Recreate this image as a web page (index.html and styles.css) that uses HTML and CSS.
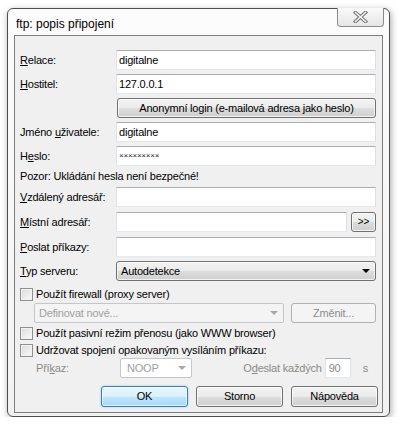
FILE: index.html
```html
<!DOCTYPE html>
<html lang="cs">
<head>
<meta charset="utf-8">
<title>ftp: popis připojení</title>
<link rel="stylesheet" href="styles.css">
</head>
<body>
<div class="window">
  <div class="titlebar">
    <span class="title">ftp: popis připojení</span>
    <div class="close">
      <svg width="15" height="12" viewBox="0 0 15 12"><path d="M2.5 1.5 L12.5 10.5 M12.5 1.5 L2.5 10.5" stroke="#7a7a7a" stroke-width="3.6" stroke-linecap="square" fill="none"/><path d="M2.5 1.5 L12.5 10.5 M12.5 1.5 L2.5 10.5" stroke="#f4f4f4" stroke-width="1.5" stroke-linecap="square" fill="none"/></svg>
    </div>
  </div>
  <div class="client">
    <div class="row first"><span class="lbl"><u>R</u>elace:</span><div class="field">digitalne</div></div>
    <div class="row"><span class="lbl"><u>H</u>ostitel:</span><div class="field">127.0.0.1</div></div>
    <div class="row"><div class="btn anon">Anonymní login (e-mailová adresa jako heslo)</div></div>
    <div class="row"><span class="lbl">Jméno <u>u</u>živatele:</span><div class="field">digitalne</div></div>
    <div class="row"><span class="lbl">H<u>e</u>slo:</span><div class="field pwd">×××××××××</div></div>
    <div class="note">Pozor: Ukládání hesla není bezpečné!</div>
    <div class="row m3"><span class="lbl"><u>V</u>zdálený adresář:</span><div class="field"></div></div>
    <div class="row m5"><span class="lbl"><u>M</u>ístní adresář:</span><div class="field"></div><div class="btn small">&gt;&gt;</div></div>
    <div class="row m5"><span class="lbl"><u>P</u>oslat příkazy:</span><div class="field"></div></div>
    <div class="row"><span class="lbl"><u>T</u>yp serveru:</span><div class="combo"><span>Autodetekce</span><span class="arrow"></span></div></div>
    <div class="check m6"><span class="box"></span><span>Použít firewall (proxy server)</span></div>
    <div class="row m2 indent">
      <div class="dcombo wide"><span>Definovat nové...</span><span class="arrow grey"></span></div>
      <div class="btn disabled change">Změnit...</div>
    </div>
    <div class="check m3"><span class="box"></span><span>Použít pasivní režim přenosu (jako WWW browser)</span></div>
    <div class="check m3"><span class="box"></span><span>Udržovat spojení opakovaným vysíláním příkazu:</span></div>
    <div class="row m1 cmdrow">
      <span class="lbl dim short">Pří<u>k</u>az:</span>
      <div class="dcombo noop"><span>NOOP</span><span class="arrow grey"></span></div>
      <span class="dim every">O<u>d</u>eslat každých</span>
      <div class="field num">90</div>
      <span class="dim unit">s</span>
    </div>
    <div class="buttons">
      <div class="btn default">OK</div>
      <div class="btn">Storno</div>
      <div class="btn">Nápověda</div>
    </div>
  </div>
</div>
</body>
</html>
```
FILE: styles.css
```css
* { box-sizing: border-box; }
body {
  margin: 0;
  background: #fff;
  font-family: "Liberation Sans", Arial, sans-serif;
  font-size: 11px;
  letter-spacing: -0.2px;
  color: #000;
}
.window {
  margin: 8px 0 0 7px;
  width: 383px;
  height: 409px;
  border: 1px solid #4e4e4e;
  border-radius: 6px;
  background: linear-gradient(#fcfcfc, #f2f2f2);
  box-shadow: 1px 2px 7px rgba(0,0,0,0.35);
  display: flex;
  flex-direction: column;
}
.titlebar {
  height: 26px;
  display: flex;
  justify-content: space-between;
  align-items: flex-start;
  padding-left: 8px;
}
.title {
  font-size: 12px;
  letter-spacing: 0;
  line-height: 14px;
  margin-top: 8px;
  color: #000;
}
.close {
  width: 47px;
  height: 19px;
  margin-top: -1px;
  margin-right: 5px;
  border: 1px solid #8c8c8c;
  border-top: none;
  border-radius: 0 0 4px 4px;
  background: linear-gradient(#fafafa, #e6e6e6);
  display: flex;
  justify-content: center;
  align-items: center;
}
.client {
  flex: 1;
  margin: 0 6px 3px 6px;
  border: 1px solid #7d7d7d;
  background: #f0f0f0;
  padding: 14px 6px 0 5px;
  display: flex;
  flex-direction: column;
}
.row {
  display: flex;
  align-items: center;
  height: 20px;
  margin-top: 4px;
}
.row.first { margin-top: 0; }
.m1 { margin-top: 1px; }
.m2 { margin-top: 2px; }
.m3 { margin-top: 3px; }
.m5 { margin-top: 5px; }
.m6 { margin-top: 6px; }
.lbl { width: 96px; flex: none; white-space: nowrap; }
.field {
  flex: 1;
  height: 20px;
  background: #fff;
  border: 1px solid;
  border-color: #abadb3 #dbdfe6 #e3e9ef #e2e3ea;
  padding: 0 2px;
  line-height: 18px;
}
.pwd { font-size: 8px; letter-spacing: -0.2px; color: #222; }
.btn {
  height: 20px;
  border: 1px solid #707070;
  border-radius: 3px;
  background: linear-gradient(#f2f2f2 0%, #ebebeb 50%, #dddddd 50%, #cfcfcf 100%);
  box-shadow: inset 0 0 0 1px rgba(255,255,255,0.75);
  text-align: center;
  line-height: 18px;
  white-space: nowrap;
}
.anon { margin-left: 97px; flex: 1; }
.small { width: 25px; margin-left: 4px; font-size: 10px; letter-spacing: 0; }
.note { margin-top: 2px; height: 16px; line-height: 16px; }
.combo {
  flex: 1;
  height: 20px;
  border: 1px solid #707070;
  border-radius: 3px;
  background: linear-gradient(#f2f2f2 0%, #ebebeb 50%, #dddddd 50%, #cfcfcf 100%);
  box-shadow: inset 0 0 0 1px rgba(255,255,255,0.75);
  display: flex;
  align-items: center;
  justify-content: space-between;
  padding: 0 5px 0 4px;
  font-size: 11px;
}
.arrow {
  width: 0;
  height: 0;
  border-left: 4px solid transparent;
  border-right: 4px solid transparent;
  border-top: 4px solid #000;
}
.arrow.grey { border-top-color: #a8a8a8; }
.check {
  display: flex;
  align-items: center;
  gap: 3px;
  height: 14px;
  white-space: nowrap;
}
.box {
  width: 13px;
  height: 13px;
  flex: none;
  border: 1px solid #8e8f8f;
  background: linear-gradient(135deg, #dadada, #fbfbfb);
  box-shadow: inset 0 0 0 1px #f2f2f2;
}
.indent { margin-left: 14px; }
.dcombo {
  height: 20px;
  border: 1px solid #c3c7cb;
  border-radius: 2px;
  background: #f4f4f4;
  color: #a0a0a0;
  display: flex;
  align-items: center;
  justify-content: space-between;
  padding: 0 5px 0 4px;
}
.wide { width: 250px; }
.btn.disabled {
  border-color: #adb2b5;
  background: #f4f4f4;
  color: #8d8d8d;
  box-shadow: none;
}
.change { width: 85px; margin-left: 7px; }
.cmdrow { margin-left: 16px; }
.dim { color: #8a8a8a; }
.short { width: 84px; }
.noop { width: 72px; background: #fff; padding-left: 6px; }
.every { margin-left: auto; margin-right: 3px; white-space: nowrap; }
.num { flex: none; width: 26px; color: #8a8a8a; padding-left: 3px; }
.unit { margin-left: 12px; margin-right: 8px; }
.buttons {
  display: flex;
  justify-content: flex-end;
  gap: 8px;
  margin-top: 8px;
  margin-right: -2px;
}
.buttons .btn { width: 87px; height: 21px; line-height: 19px; }
.btn.default {
  border-color: #3c7fb1;
  background: linear-gradient(#eaf6fd 0%, #d9f0fc 50%, #bee6fd 50%, #a7d9f5 100%);
  box-shadow: inset 0 0 0 1px rgba(255,255,255,0.6), 0 0 2px #7ec3ea;
}
```
